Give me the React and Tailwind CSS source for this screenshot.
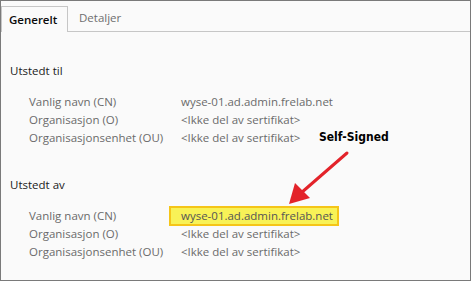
export default function App() {
  const font = { fontFamily: '"Open Sans", "Noto Sans", sans-serif' };
  const Row = ({ label, value, highlight }) => (
    <div className="flex h-[18px] items-center leading-[18px]">
      <div className="w-[152px] shrink-0 text-[#6a6a6a]">{label}</div>
      <div className="relative text-[#6a6a6a]">
        {highlight && (
          <div className="absolute left-[-12px] top-[-1px] h-[20px] w-[170px] border-2 border-[#f5c518] bg-[#f8f257]" />
        )}
        <span className={highlight ? "relative text-[#555]" : "relative"}>{value}</span>
      </div>
    </div>
  );
  return (
    <div
      className="relative h-[281px] w-[471px] overflow-hidden border border-[#7a7a7a] bg-[#fafafa] text-[11.5px]"
      style={font}
    >
      <div className="flex h-[31px] items-end">
        <div className="flex h-[26px] w-[67px] items-center border-l border-r border-t border-[#c6c6c6] bg-[#fafafa] pl-[7px] text-[#0a0a0a] font-semibold">
          Generelt
        </div>
        <div className="flex h-full flex-1 items-end border-b border-[#c6c6c6]">
          <div className="flex h-[26px] items-center pl-[11px] text-[#6e6e6e]">Detaljer</div>
        </div>
      </div>

      <div className="pl-[9px] pt-[30px]">
        <div className="h-[18px] leading-[18px] text-[#1a1a1a]">Utstedt til</div>
        <div className="mt-[13px] pl-[19px]">
          <Row label="Vanlig navn (CN)" value="wyse-01.ad.admin.frelab.net" />
          <Row label="Organisasjon (O)" value="<Ikke del av sertifikat>" />
          <Row label="Organisasjonsenhet (OU)" value="<Ikke del av sertifikat>" />
        </div>
        <div className="mt-[29px] h-[18px] leading-[18px] text-[#1a1a1a]">Utstedt av</div>
        <div className="mt-[13px] pl-[19px]">
          <Row label="Vanlig navn (CN)" value="wyse-01.ad.admin.frelab.net" highlight />
          <Row label="Organisasjon (O)" value="<Ikke del av sertifikat>" />
          <Row label="Organisasjonsenhet (OU)" value="<Ikke del av sertifikat>" />
        </div>
      </div>

      <div
        className="absolute left-[318px] top-[127px] text-[12px] font-bold text-black"
        style={{ fontFamily: '"DejaVu Sans Condensed", "DejaVu Sans", Verdana, sans-serif' }}
      >
        Self-Signed
      </div>
      <svg className="absolute left-0 top-0" width="471" height="281" viewBox="0 0 471 281">
        <line x1="346" y1="152" x2="300" y2="192" stroke="#e3232a" strokeWidth="3" strokeLinecap="round" />
        <polygon points="288,203 294,182 309,197" fill="#e3232a" />
      </svg>
    </div>
  );
}
